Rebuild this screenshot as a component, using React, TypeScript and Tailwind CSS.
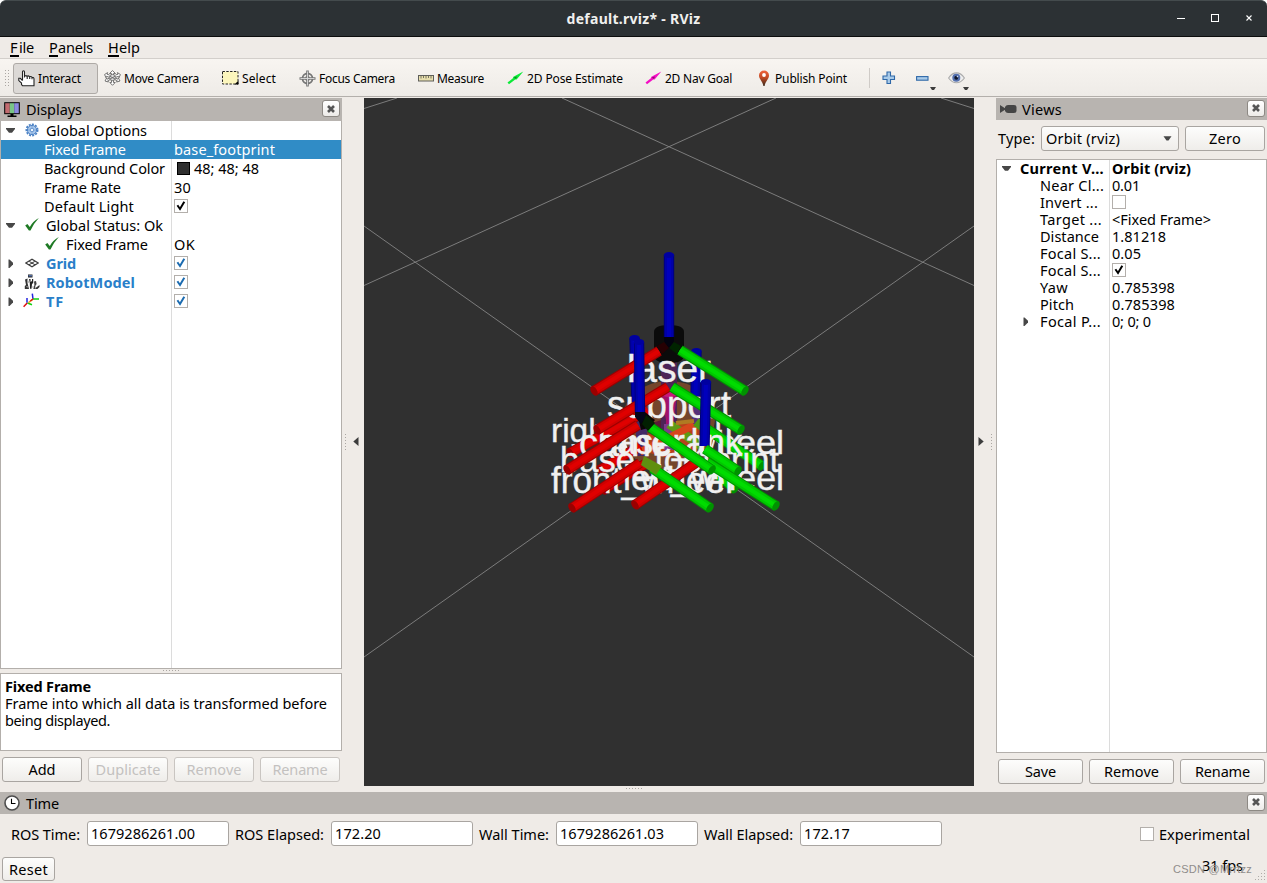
import { useLayoutEffect, useRef, useState } from "react";
import type { ReactNode } from "react";

/** Text run whose tracking is adjusted so that it spans w pixels. */
function T({ w, children, className = "" }: { w?: number; children: string; className?: string }) {
  const ref = useRef<HTMLSpanElement>(null);
  const [ls, setLs] = useState(0);
  useLayoutEffect(() => {
    const el = ref.current;
    if (!el || !w) return;
    setLs((w - el.getBoundingClientRect().width) / children.length);
  }, [w, children]);
  return (
    <span ref={ref} className={`inline-block whitespace-pre ${className}`} style={{ letterSpacing: ls }}>
      {children}
    </span>
  );
}

function Arrow({ open }: { open?: boolean }) {
  return (
    <svg width="10" height="10" viewBox="0 0 10 10" className="shrink-0">
      <path d={open ? "M0 2H9V3L6 6.8H3L0 3Z" : "M2.5 0.5H3.5L7 3.8V5.5L3.5 9H2.5Z"} fill="#474747" />
    </svg>
  );
}

function Check({ on, blue }: { on?: boolean; blue?: boolean }) {
  return (
    <span className="block size-[14px] shrink-0 border border-[#b3afab] bg-white">
      {on && (
        <svg width="12" height="12" viewBox="0 0 12 12" className="block">
          <path d="M2.4 5.3L5 9L9.3 1.8" fill="none" stroke={blue ? "#1b6bb0" : "#000"} strokeWidth="2" />
        </svg>
      )}
    </span>
  );
}

function Close() {
  return (
    <span className="mr-[2px] mb-[2px] flex h-[17px] w-[18px] items-center justify-center rounded-[3px] border border-[#8d8984] bg-linear-to-b from-white to-[#edebe8]">
      <svg width="8" height="8" viewBox="0 0 8 8">
        <path d="M1 1L7 7M7 1L1 7" stroke="#555" strokeWidth="2.6" />
      </svg>
    </span>
  );
}

function Header({ icon, children }: { icon: ReactNode; children: ReactNode }) {
  return (
    <div className="flex h-full items-center bg-[#b8b4b0] pl-[4px]">
      <span className="mr-[6px] flex w-4 justify-center">{icon}</span>
      {children}
      <span className="ml-auto">
        <Close />
      </span>
    </div>
  );
}

function Btn({ children, w, disabled, className = "" }: { children: string; w?: number; disabled?: boolean; className?: string }) {
  return (
    <button
      className={`flex items-center justify-center rounded-[3px] border bg-linear-to-b from-[#fdfdfc] to-[#efedea] ${
        disabled ? "border-[#c9c5c1] text-[#c3c1bf]" : "border-[#a9a5a1] text-black"
      } ${className}`}
    >
      <T w={w}>{children}</T>
    </button>
  );
}

/* ---------- toolbar icons ---------- */

const Hand = () => (
  <svg width="17" height="17" viewBox="0 0 17 17">
    <path
      d="M4.5 10.5V2Q4.5 .8 5.5 .8T6.5 2V6.5Q7.5 5 9 6.2Q10.5 5.3 11.5 6.7Q13 6 14 7.2Q16 7 16 9V15.7H4.5L3.5 14.5V13L.8 10.6V8.3H2.3L4.5 10.5M9.2 6.5V9M11.7 7V9M14 7.5V9.3"
      fill="#fff"
      stroke="#222"
      strokeWidth="1.1"
    />
  </svg>
);
const MoveCam = () => (
  <svg width="17" height="16" viewBox="0 0 17 16" fill="#fff" stroke="#666" strokeWidth=".9">
    <path d="M7.5 6V3.5H5.5L8.5 .6L11.5 3.5H9.5V6M7.5 10V12.5H5.8L8.5 15.3L11.2 12.5H9.5V10" />
    <path d="M5.5 5L3 4.2L3.6 2.6L.6 4.5L2 7.8L2.6 6.3L5 7.2M11.5 5L14 4.2L13.4 2.6L16.4 4.5L15 7.8L14.4 6.3L12 7.2" />
    <path d="M5.2 8.2L3.2 9.2L2.6 8L1 11L4.4 12L3.8 10.7L6 9.7M11.8 8.2L13.8 9.2L14.4 8L16 11L12.6 12L13.2 10.7L11 9.7" />
    <circle cx="8.5" cy="7.5" r="3.1" fill="#ddd" />
    <path d="M6 6.3L11 9M11 6.3L6 9" />
  </svg>
);
const SelectIc = () => (
  <svg width="17" height="14" viewBox="0 0 17 14">
    <rect x=".5" y=".5" width="15.5" height="12.5" fill="#fcf6bd" stroke="#222" strokeDasharray="2.4 1.4" />
    <path d="M16.5 9.5V13.5H12.5Z" fill="#000" />
  </svg>
);
const FocusIc = () => (
  <svg width="17" height="17" viewBox="0 0 17 17" fill="none">
    <circle cx="8.5" cy="8.5" r="5" stroke="#777" strokeWidth="1.8" />
    <circle cx="8.5" cy="8.5" r="2.3" stroke="#999" />
    <path d="M8.5 .5V16.5M.5 8.5H16.5" stroke="#777" strokeWidth="2.6" />
    <path d="M8.5 1.5V15.5M1.5 8.5H15.5" stroke="#ddd" strokeWidth=".9" />
  </svg>
);
const Ruler = () => (
  <svg width="16" height="7" viewBox="0 0 16 7">
    <rect x=".5" y=".5" width="15" height="5.5" fill="#e8dfae" stroke="#5f5f5a" />
    <path d="M3 1V3.5M5.5 1V3M8 1V3.5M10.5 1V3M13 1V3.5" stroke="#77745f" />
  </svg>
);
const ArrowIc = ({ c }: { c: string }) => (
  <svg width="17" height="14" viewBox="0 0 17 14">
    <path d="M16.3 .6L9.6 8.6L8.2 8.4L2 13.3L.5 11.6L6.2 7L6 5.9Z" fill={c} />
    <path d="M7 6.3L10 5.6L9.2 7.4L8 7.8Z" fill="#000" opacity=".4" />
  </svg>
);
const Pin = () => (
  <svg width="12" height="17" viewBox="0 0 12 17">
    <defs>
      <linearGradient id="pin" x1="0" y1="0" x2="0" y2="1">
        <stop offset="0" stopColor="#f0633c" />
        <stop offset=".45" stopColor="#c34a24" />
        <stop offset="1" stopColor="#3a2a1c" />
      </linearGradient>
    </defs>
    <path d="M6 .5A5 5 0 0 1 11 5.5C11 9 7.5 11 6.6 16H5.4C4.5 11 1 9 1 5.5A5 5 0 0 1 6 .5Z" fill="url(#pin)" />
    <circle cx="6" cy="5" r="1.9" fill="#fff" />
  </svg>
);
const Eye = () => (
  <svg width="17" height="12" viewBox="0 0 17 12">
    <path d="M.6 6Q4 .9 8.5 .9T16.4 6Q13 10.8 8.5 10.8T.6 6Z" fill="#eee" stroke="#aaa" strokeWidth="1.1" />
    <circle cx="8.3" cy="5.8" r="4" fill="#5470ae" />
    <circle cx="8.3" cy="5.8" r="2" fill="#10182e" />
    <circle cx="9.4" cy="4.6" r=".8" fill="#cfdcf5" />
  </svg>
);

function Tool({ icon, w, children, className = "" }: { icon: ReactNode; w: number; children: string; className?: string }) {
  return (
    <div className={`flex h-[31px] shrink-0 items-center ${className}`}>
      <span className="mr-[3px] flex w-[17px] shrink-0 justify-center">{icon}</span>
      <T w={w} className="pt-px">{children}</T>
    </div>
  );
}

/* ---------- tree icons ---------- */

const Monitor = () => (
  <svg width="16" height="16" viewBox="0 0 16 16">
    <rect x=".2" y=".2" width="15.6" height="12" fill="#000" />
    <path d="M1.2 1.2H5.8V11.2H1.2Z" fill="#c26b70" />
    <path d="M5.8 1.2H10.2V11.2H5.8Z" fill="#79c587" />
    <path d="M10.2 1.2H14.8V11.2H10.2Z" fill="#8b8be0" />
    <path d="M6.5 12H9.5V13.5H12.5V15H3.5V13.5H6.5Z" fill="#000" />
  </svg>
);
const Camera = () => (
  <svg width="17" height="10" viewBox="0 0 17 10" className="shrink-0">
    <path d="M0 1V9L5 5.7V7Q6 9 8 9H14Q16.5 9 16.5 7V3Q16.5 1 14 1H8Q6 1 5 3V4.3Z" fill="#454545" />
  </svg>
);
const Clock = () => (
  <svg width="16" height="16" viewBox="0 0 16 16" className="shrink-0">
    <circle cx="8" cy="8" r="7" fill="#fff" stroke="#4d4d4d" strokeWidth="1.6" />
    <path d="M7.5 3.8V8.5H11.5" fill="none" stroke="#000" strokeWidth="1.1" />
  </svg>
);
const Gear = () => (
  <svg width="14" height="14" viewBox="0 0 14 14">
    <circle cx="7" cy="7" r="5.6" fill="none" stroke="#4a80c4" strokeWidth="1.8" strokeDasharray="2 1.2" />
    <circle cx="7" cy="7" r="4.6" fill="#a9c8ec" stroke="#4a80c4" />
    <circle cx="7" cy="7" r="1.8" fill="#eef5fd" stroke="#4a80c4" strokeWidth=".8" />
    <path d="M7 2.6V4.6M7 9.4V11.4M2.6 7H4.6M9.4 7H11.4" stroke="#6f9bd2" strokeWidth=".8" />
  </svg>
);
const Ok = () => (
  <svg width="14" height="13" viewBox="0 0 14 13">
    <path d="M.2 7.6L2.4 6L4.8 8.9Q8 3.3 13.8 .1Q8.7 5.5 5.5 12.6H3.9Z" fill="#1f7a25" />
  </svg>
);
const GridIc = () => (
  <svg width="14" height="10" viewBox="0 0 14 10">
    <path d="M.8 5L7 1.2L13.2 5L7 8.8ZM3.9 3.1L10.1 6.9M10.1 3.1L3.9 6.9" fill="none" stroke="#3c3c3c" strokeWidth="1.1" />
  </svg>
);
const Robot = () => (
  <svg width="16" height="16" viewBox="0 0 16 16">
    <path d="M4 .5H8.5V3.5H4Z" fill="#222" />
    <path d="M4.5 1.2H8V2.4H4.5Z" fill="#5e7fc4" />
    <path d="M1 5.5L3.5 4.5V9L5 15H.8V12L2 11Z" fill="#333" />
    <path d="M5 5H6.5V8L8 7V5H9.2V9L8 10L7.5 14.8H6L5.8 9Z" fill="#222" />
    <path d="M10 7.5L12 7L12.6 10L11.3 12V15H9.3L10.4 11Z" fill="#444" />
    <path d="M11.5 14L15.5 11V13L13.5 15H11.5Z" fill="#333" />
    <path d="M3.5 6L5 9M2.4 12.6L4 13M9 12V14" stroke="#aaa" />
  </svg>
);
const TfIc = () => (
  <svg width="17" height="15" viewBox="0 0 17 15" fill="none" strokeWidth="1.5">
    <path d="M9.3 .6L10 6M4 5V9.8" stroke="#2323e0" />
    <path d="M10 6H16M4.5 10L9 11.8" stroke="#12d012" />
    <path d="M5.5 9.6L10 6.2" stroke="#e8a020" />
    <path d="M4.2 10L.6 13.8M10 6L7.4 8" stroke="#e01212" />
  </svg>
);

/* ---------- display tree ---------- */

type DRow = {
  label: string;
  w: number;
  arrow?: "open" | "closed";
  icon?: ReactNode;
  sub?: boolean;
  link?: boolean;
  sel?: boolean;
  value?: string;
  vw?: number;
  swatch?: boolean;
  check?: boolean;
};

const displays: DRow[] = [
  { label: "Global Options", w: 101, arrow: "open", icon: <Gear /> },
  { label: "Fixed Frame", w: 82, sel: true, value: "base_footprint", vw: 101 },
  { label: "Background Color", w: 121, value: "48; 48; 48", vw: 65, swatch: true },
  { label: "Frame Rate", w: 77, value: "30", vw: 17 },
  { label: "Default Light", w: 90, check: true },
  { label: "Global Status: Ok", w: 117, arrow: "open", icon: <Ok /> },
  { label: "Fixed Frame", w: 82, sub: true, icon: <Ok />, value: "OK", vw: 21 },
  { label: "Grid", w: 30, arrow: "closed", icon: <GridIc />, link: true, check: true },
  { label: "RobotModel", w: 89, arrow: "closed", icon: <Robot />, link: true, check: true },
  { label: "TF", w: 18, arrow: "closed", icon: <TfIc />, link: true, check: true },
];

function DisplayRow({ r }: { r: DRow }) {
  return (
    <div className={`flex h-[19px] ${r.sel ? "bg-[#308cc6] text-white" : ""}`}>
      <div className={`flex w-[171px] shrink-0 items-center border-r ${r.sel ? "border-[#308cc6]" : "border-[#dcdcdc]"}`}>
        {r.arrow && (
          <span className="ml-[5px] flex">
            <Arrow open={r.arrow === "open"} />
          </span>
        )}
        {r.icon ? (
          <span className={`mr-[6px] flex w-[17px] justify-center pb-[2px] ${r.sub ? "ml-[42px]" : "ml-[7px]"}`}>{r.icon}</span>
        ) : (
          <span className="w-[43px]" />
        )}
        <T w={r.w} className={r.link ? "font-bold text-[#2a7fc9]" : ""}>
          {r.label}
        </T>
      </div>
      <div className="flex items-center pl-[2px]">
        {r.swatch && <span className="mr-[4px] ml-[3px] size-[13px] border border-black bg-[#303030]" />}
        {r.value && <T w={r.vw}>{r.value}</T>}
        {r.check && <span className="pb-px"><Check on blue={r.link} /></span>}
      </div>
    </div>
  );
}

type VRow = { label: string; w: number; value?: string; vw?: number; check?: boolean; top?: boolean; arrow?: boolean };
const views: VRow[] = [
  { label: "Current V...", w: 84, value: "Orbit (rviz)", vw: 79, top: true },
  { label: "Near Cl...", w: 64, value: "0.01", vw: 28 },
  { label: "Invert ...", w: 58, check: false },
  { label: "Target ...", w: 62, value: "<Fixed Frame>", vw: 99 },
  { label: "Distance", w: 59, value: "1.81218", vw: 54 },
  { label: "Focal S...", w: 61, value: "0.05", vw: 29 },
  { label: "Focal S...", w: 61, check: true },
  { label: "Yaw", w: 28, value: "0.785398", vw: 63 },
  { label: "Pitch", w: 34, value: "0.785398", vw: 63 },
  { label: "Focal P...", w: 61, value: "0; 0; 0", vw: 39, arrow: true },
];

/* ---------- 3D view ---------- */

type Rod = [number, number, number, number, "r" | "g" | "b"];
const shades = {
  r: ["#9a0000", "#cf0000", "#e00000"],
  g: ["#009200", "#00c800", "#00dc00"],
  b: ["#000078", "#0000a8", "#0000bc"],
};
const backRods: Rod[] = [
  [634.5, 338, 636.5, 402, "b"],
  [696.5, 351, 695.5, 396, "b"],
  [648, 410, 570, 453, "r"],
  [640, 446, 600, 470, "r"],
  [645, 464, 603, 490, "r"],
  [704, 427, 762, 466, "g"],
  [703, 462, 735, 489, "g"],
];
const frontRods: Rod[] = [
  [669, 255, 669, 337, "b"],
  [659, 351, 594, 391, "r"],
  [680, 350, 745, 391, "g"],
  [668, 387, 597, 430, "r"],
  [672, 387, 741, 430, "g"],
  [706, 382, 704.5, 446, "b"],
  [705, 449, 738, 471, "g"],
  [697, 462, 635, 505, "r"],
  [707, 462, 776, 506, "g"],
  [640, 463, 572, 508, "r"],
  [652, 468, 710, 508, "g"],
  [639, 342, 640, 412, "b"],
  [638, 425, 567, 470, "r"],
  [650, 427, 712, 470, "g"],
];

function RodShape({ rod }: { rod: Rod }) {
  const [x1, y1, x2, y2, k] = rod;
  const [dark, mid, light] = shades[k];
  const angle = (Math.atan2(y2 - y1, x2 - x1) * 180) / Math.PI;
  const ex = k === "b" ? x1 : x2;
  const ey = k === "b" ? y1 : y2;
  return (
    <g>
      <line x1={x1} y1={y1} x2={x2} y2={y2} stroke={dark} strokeWidth="10.4" />
      <line x1={x1} y1={y1} x2={x2} y2={y2} stroke={mid} strokeWidth="8.4" />
      <line x1={x1} y1={y1} x2={x2} y2={y2} stroke={light} strokeWidth="4" />
      <ellipse cx={ex} cy={ey} rx="3" ry="5.2" fill={k === "b" ? "#0000a0" : dark} transform={`rotate(${angle} ${ex} ${ey})`} />
    </g>
  );
}

type FrameName = [string, number, number, number, number];
const hiddenNames: FrameName[] = [
  ["right_wheel", 551, 442, 171, 34],
  ["left_wheel", 622, 454, 162, 34],
];
const frameNames: FrameName[] = [
  ["base_link", 598, 454, 144, 35],
  ["base_footprint", 560, 472, 219, 35],
  ["front_wheel", 551, 492.5, 182, 36],
  ["left_wheel", 623, 490, 161, 35],
  ["camera", 579, 456, 127, 38],
  ["support", 607, 418, 124, 38],
  ["laser", 627, 382, 84, 38],
];

function Names({ list }: { list: FrameName[] }) {
  return (
    <g fill="#f0f0f0" stroke="#f0f0f0" strokeWidth=".4" fontFamily="'Liberation Sans', sans-serif">
      {list.map(([name, x, y, len, size], i) => (
        <text key={i} x={x} y={y} fontSize={size} textLength={len} lengthAdjust="spacingAndGlyphs">
          {name}
        </text>
      ))}
    </g>
  );
}

function Scene() {
  return (
    <svg width="610" height="688" viewBox="364 98 610 688" className="block bg-[#303030]">
      <g stroke="#858585" strokeWidth=".9">
        <path d="M364 108.5L397 98M941 98L974 108.5M562 98L974 285.5M776 98L364 285.5M364 226L974 657M974 226L364 657" />
      </g>
      <Names list={hiddenNames} />
      <ellipse cx="669" cy="418" rx="46" ry="37" fill="#74452b" />
      <path d="M624 418V436Q630 470 669 471T714 436V418Z" fill="#74452b" />
      <path d="M646 452L648 434L690 420L702 428L696 450L668 458Z" fill="#b8401c" />
      <path d="M661 362H677V440H661Z" fill="#4c2456" />
      <path d="M661 394V440L647 432V425L661 420Z" fill="#5a1a38" />
      <path d="M661 394L666 420V426H673L677 394Z" fill="#a0126a" />
      <ellipse cx="669" cy="394" rx="8" ry="3" fill="#c8187c" />
      <path d="M664 424H674V450H664Z" fill="#7c3a8a" />
      <path d="M654 332Q654 325 669 325T684 332V355Q684 363 669 363T654 355Z" fill="#0b0b0b" />
      <path d="M636 398H647V456H636Z" fill="#432a66" />
      <path d="M692 394H700V424H692Z" fill="#563078" />
      <path d="M669 424L704 448" stroke="#5f9a14" strokeWidth="9" />
      <path d="M640 452L694 425" stroke="#d8461c" strokeWidth="7" />
      <path d="M676 423L694 421" stroke="#b07a22" strokeWidth="4" />
      <path d="M696 422L712 434" stroke="#4c9a14" strokeWidth="9" />
      {backRods.map((r, i) => (
        <RodShape key={i} rod={r} />
      ))}
      <Names list={frameNames} />
      <path d="M638 416L645 412L655 420L648 428L641 430Z" fill="#0a0605" />
      {frontRods.map((r, i) => (
        <RodShape key={i} rod={r} />
      ))}
      <path d="M664 337H674V341L669 349L664 341Z" fill="#02020f" />
      <path d="M664 342L669 348L662 354L657 346Z" fill="#260003" />
      <path d="M674 342L669 348L677 354L681 346Z" fill="#002400" />
      <path d="M635 412H645V418L641 424L635 417Z" fill="#04041a" />
      <path d="M646 415L655 423L648 431L642 424Z" fill="#022002" />
      <path d="M644 456L662 466L656 475L641 465Z" fill="#5f8f10" />
    </svg>
  );
}

function Dots({ across }: { across?: boolean }) {
  return (
    <span className={`flex gap-[2px] ${across ? "" : "flex-col"}`}>
      {[0, 1, 2, 3, 4, 5].map((i) => (
        <span key={i} className="size-px bg-[#aaa6a2]" />
      ))}
    </span>
  );
}

function Splitter({ dir }: { dir: "l" | "r" }) {
  return (
    <div className={`flex w-[22px] shrink-0 items-center ${dir === "l" ? "pl-[3px]" : "pl-[4px]"}`}>
      {dir === "l" && <span className="mr-[7px]"><Dots /></span>}
      <svg width="6" height="10" viewBox="0 0 6 10">
        <path d={dir === "l" ? "M5.5 0V9L.3 4.5Z" : "M.5 0V9L5.7 4.5Z"} fill="#3c3c3c" />
      </svg>
      {dir === "r" && <span className="ml-[7px]"><Dots /></span>}
    </div>
  );
}

function Field({ label, lw, value, vw }: { label: string; lw: number; value: string; vw: number }) {
  return (
    <div className="flex items-center">
      <T w={lw} className="pt-px">{label}</T>
      <div className="ml-[7px] flex h-[25px] w-[142px] items-center rounded-[3px] border border-[#a9a5a1] bg-white pl-[3px]">
        <T w={vw}>{value}</T>
      </div>
    </div>
  );
}

function Caret({ className }: { className: string }) {
  return (
    <svg width="6" height="3" viewBox="0 0 6 3" className={`absolute ${className}`}>
      <path d="M0 0H6L4 3H2Z" fill="#3c3c3c" />
    </svg>
  );
}

function MenuItem({ k, kw, rest, rw }: { k: string; kw: number; rest: string; rw: number }) {
  return (
    <span className="flex">
      <T w={kw} className="underline decoration-[1.5px] underline-offset-2">{k}</T>
      <T w={rw}>{rest}</T>
    </span>
  );
}

export default function App() {
  return (
    <div className="flex h-[883px] w-[1267px] flex-col overflow-hidden bg-[#efebe7] font-['Noto_Sans',sans-serif] text-[14.5px] leading-[17px] text-black">
      {/* title bar */}
      <div className="bg-white">
        <div className="relative flex h-[37px] items-center justify-center rounded-t-[6px] border-t border-b border-t-[#444b4d] border-b-[#0c0d0d] bg-[#2c3134] font-bold text-[#f0f0ee]">
          <T w={134} className="text-[14px]">default.rviz* - RViz</T>
          <svg width="80" height="12" viewBox="0 0 80 12" className="absolute top-[11px] right-[11px]" fill="none" stroke="#fff">
            <path d="M1 6.5H9" />
            <rect x="35.5" y="2.5" width="7" height="7" />
            <path d="M70.5 3.5L75.5 8.5M75.5 3.5L70.5 8.5" strokeWidth="1.1" />
          </svg>
        </div>
      </div>

      {/* menu bar */}
      <div className="flex h-[22px] items-center gap-[15px] border-b border-[#d3cfcb] pl-[10px]">
        <MenuItem k="F" kw={9} rest="ile" rw={15} />
        <MenuItem k="P" kw={9} rest="anels" rw={35} />
        <MenuItem k="H" kw={11} rest="elp" rw={21} />
      </div>

      {/* toolbar */}
      <div className="mb-px flex h-[38px] items-center border-b border-[#b3afab] bg-linear-to-b from-[#f8f5f1] to-[#eeebe7] pt-px pl-[5px] text-[12px]">
        <span className="mr-[4px] flex gap-[2px]">
          <Dots />
          <Dots />
        </span>
        <Tool icon={<Hand />} w={43} className="mr-[6px] w-[85px] rounded-[3px] border border-[#aeaaa6] bg-[#dcd9d6] pl-[4px]">Interact</Tool>
        <Tool icon={<MoveCam />} w={75} className="w-[118px]">Move Camera</Tool>
        <Tool icon={<SelectIc />} w={34} className="w-[77px]">Select</Tool>
        <Tool icon={<FocusIc />} w={76} className="w-[118px]">Focus Camera</Tool>
        <Tool icon={<Ruler />} w={47} className="w-[90px]">Measure</Tool>
        <Tool icon={<ArrowIc c="#0bea37" />} w={96} className="w-[138px]">2D Pose Estimate</Tool>
        <Tool icon={<ArrowIc c="#f40fc4" />} w={67} className="w-[110px]">2D Nav Goal</Tool>
        <Tool icon={<Pin />} w={72} className="w-[114px]">Publish Point</Tool>
        <span className="mr-[12px] h-[20px] border-l border-[#cfcbc7]" />
        <svg width="14" height="14" viewBox="0 0 14 14" className="mr-[20px]">
          <path d="M5 1H8.5V5H12.5V8.5H8.5V12.5H5V8.5H1V5H5Z" fill="#a9cbe9" stroke="#2f68a8" strokeWidth="1.1" />
        </svg>
        <span className="relative mr-[19px] flex">
          <svg width="13" height="5" viewBox="0 0 13 5">
            <rect x=".6" y=".6" width="11.4" height="3.6" fill="#a9cbe9" stroke="#2f68a8" strokeWidth="1.1" />
          </svg>
          <Caret className="top-[11px] left-[14px]" />
        </span>
        <span className="relative flex">
          <Eye />
          <Caret className="top-[15px] left-[15px]" />
        </span>
      </div>

      {/* docks and 3D view */}
      <div className="flex h-[688px]">
        <div className="flex w-[342px] flex-col">
          <div className="h-[23px] shrink-0">
            <Header icon={<Monitor />}><T w={56}>Displays</T></Header>
          </div>
          <div className="flex h-[548px] flex-col border border-t-0 border-[#b3afab] bg-white">
            {displays.map((r, i) => (
              <DisplayRow key={i} r={r} />
            ))}
            <div className="w-[171px] flex-1 border-r border-[#dcdcdc]" />
          </div>
          <div className="flex h-[4px] items-start justify-center pt-px"><Dots across /></div>
          <div className="flex h-[78px] flex-col border border-[#b3afab] bg-white pt-[4px] pl-[4px]">
            <T w={86} className="self-start font-bold">Fixed Frame</T>
            <T w={322} className="self-start">Frame into which all data is transformed before</T>
            <T w={105} className="self-start">being displayed.</T>
          </div>
          <div className="mt-[6px] flex gap-[6px] pl-[2px]">
            <Btn w={27} className="h-[25px] w-[80px]">Add</Btn>
            <Btn w={65} disabled className="h-[25px] w-[80px]">Duplicate</Btn>
            <Btn w={55} disabled className="h-[25px] w-[80px]">Remove</Btn>
            <Btn w={55} disabled className="h-[25px] w-[80px]">Rename</Btn>
          </div>
        </div>

        <Splitter dir="l" />
        <Scene />
        <Splitter dir="r" />

        <div className="flex w-[271px] flex-col">
          <div className="h-[22px] shrink-0">
            <Header icon={<Camera />}><T w={40}>Views</T></Header>
          </div>
          <div className="mt-[6px] flex items-center pl-[2px]">
            <T w={37}>Type:</T>
            <div className="ml-[6px] flex h-[25px] w-[138px] items-center justify-between rounded-[3px] border border-[#a9a5a1] bg-linear-to-b from-[#fdfdfc] to-[#efedea] pr-[6px] pl-[4px]">
              <T w={74}>Orbit (rviz)</T>
              <svg width="9" height="5" viewBox="0 0 9 5"><path d="M.5 .3H8.5L5.5 4.5H3.5Z" fill="#474747" /></svg>
            </div>
            <Btn w={32} className="ml-[6px] h-[25px] w-[80px]">Zero</Btn>
          </div>
          <div className="mt-[8px] flex h-[594px] flex-col border border-[#b3afab] bg-white">
            {views.map((r, i) => (
              <div key={i} className="flex h-[17px]">
                <div className="flex w-[113px] shrink-0 items-center border-r border-[#dcdcdc]">
                  {r.top ? (
                    <span className="mr-[8px] ml-[5px] flex"><Arrow open /></span>
                  ) : r.arrow ? (
                    <span className="mr-[9px] ml-[24px] flex"><Arrow /></span>
                  ) : (
                    <span className="w-[43px]" />
                  )}
                  <T w={r.w} className={r.top ? "font-bold" : ""}>{r.label}</T>
                </div>
                <div className="flex items-center pl-[2px]">
                  {r.value ? (
                    <T w={r.vw} className={r.top ? "font-bold" : ""}>{r.value}</T>
                  ) : (
                    <span className="pb-[2px]"><Check on={r.check} /></span>
                  )}
                </div>
              </div>
            ))}
            <div className="w-[113px] flex-1 border-r border-[#dcdcdc]" />
          </div>
          <div className="mt-[6px] flex gap-[6px] pl-[2px]">
            <Btn w={31} className="h-[25px] w-[85px]">Save</Btn>
            <Btn w={55} className="h-[25px] w-[85px]">Remove</Btn>
            <Btn w={55} className="h-[25px] w-[85px]">Rename</Btn>
          </div>
        </div>
      </div>

      <div className="flex h-[6px] shrink-0 items-start justify-center pt-[2px]"><Dots across /></div>

      {/* time panel */}
      <div className="h-[22px] shrink-0">
        <Header icon={<Clock />}><T w={33}>Time</T></Header>
      </div>
      <div className="mt-[7px] flex items-center gap-[6px] pl-[11px]">
        <Field label="ROS Time:" lw={69} value="1679286261.00" vw={104} />
        <Field label="ROS Elapsed:" lw={89} value="172.20" vw={46} />
        <Field label="Wall Time:" lw={70} value="1679286261.03" vw={104} />
        <Field label="Wall Elapsed:" lw={89} value="172.17" vw={46} />
        <div className="mr-[17px] ml-auto flex items-center gap-[5px]">
          <Check />
          <T w={91} className="pt-px">Experimental</T>
        </div>
      </div>
      <div className="relative mt-[11px] flex items-start justify-between pr-[24px] pl-[2px]">
        <Btn w={39} className="h-[24px] w-[53px]">Reset</Btn>
        <T w={41}>31 fps</T>
        <T w={79} className="absolute top-[4px] right-[15px] font-['Liberation_Sans',sans-serif] text-[11px] text-[#8f8d8b]">CSDN @Mrrtzz</T>
        <svg width="12" height="12" viewBox="0 0 12 12" className="absolute top-[13px] right-0" fill="#b0aca8">
          <path d="M9 0h1v1h-1zM6 3h1v1h-1zM9 3h1v1h-1zM3 6h1v1h-1zM6 6h1v1h-1zM9 6h1v1h-1zM0 9h1v1h-1zM3 9h1v1h-1zM6 9h1v1h-1zM9 9h1v1h-1z" />
        </svg>
      </div>
    </div>
  );
}
